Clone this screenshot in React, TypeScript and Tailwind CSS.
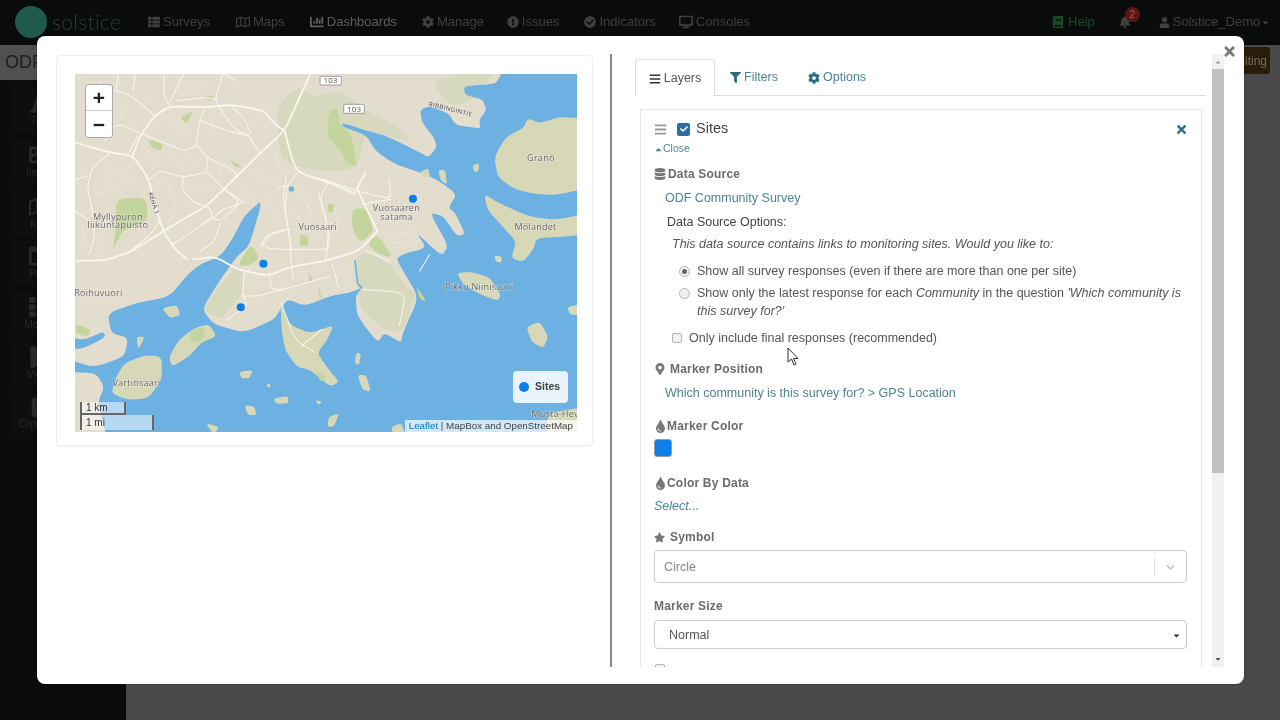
import {
  FaBars, FaBell, FaBook, FaCaretDown, FaCaretUp, FaCheck, FaCheckCircle, FaChevronDown, FaClipboard, FaCog, FaDatabase,
  FaDesktop, FaExclamationCircle, FaFilter, FaFont, FaImage, FaMapMarkerAlt, FaPlay, FaRegMap, FaChartBar, FaStar,
  FaTh, FaThList, FaTimes, FaTint, FaUser, FaColumns,
} from "react-icons/fa";
import type { ReactNode } from "react";

// rounds the corners of a traced "x,y x,y ..." outline so coasts and roads don't look like polygons
const smooth = (pts: string, closed = false) => {
  const p = pts.trim().split(/\s+/).map((s) => s.split(",").map(Number));
  const along = (a: number[], b: number[], t: number) => `${a[0] + (b[0] - a[0]) * t},${a[1] + (b[1] - a[1]) * t}`;
  const n = p.length;
  if (closed) {
    let d = `M${along(p[0], p[1], 0.3)}`;
    for (let i = 1; i <= n; i++) {
      const c = p[i % n];
      d += ` L${along(c, p[i - 1], 0.3)} Q${c[0]},${c[1]} ${along(c, p[(i + 1) % n], 0.3)}`;
    }
    return d + " Z";
  }
  let d = `M${p[0][0]},${p[0][1]}`;
  for (let i = 1; i < n - 1; i++) {
    d += ` L${along(p[i], p[i - 1], 0.3)} Q${p[i][0]},${p[i][1]} ${along(p[i], p[i + 1], 0.3)}`;
  }
  return d + ` L${p[n - 1][0]},${p[n - 1][1]}`;
};

const SEA =
  "1600,-50 1320,-50 1305,15 1288,42 1195,48 1198,75 1250,88 1262,120 1240,150 1245,176 1170,165 1150,130 1092,108 1065,120 1072,160 1105,200 1115,232 1090,262 1060,245 1020,225 960,196 905,182 835,158 835,170 905,195 935,245 990,282 1050,302 1114,328 1174,373 1149,413 1169,428 1199,493 1174,498 1134,438 1094,428 1149,528 1129,558 1054,488 1084,533 1014,553 994,568 1054,668 1054,698 1014,788 1009,818 959,788 939,818 879,738 874,678 894,653 854,668 799,678 724,708 674,688 654,713 634,748 544,788 454,763 419,718 474,628 524,558 559,528 599,388 544,438 509,508 474,558 414,583 380,610 322,680 222,700 140,730 150,790 200,802 190,860 100,892 20,868 20,905 105,910 130,950 110,1000 150,1150 1600,1150";

const WATER_EXTRA = [
  "20,800 70,810 125,785 135,800 70,835 20,838",
];

const ISLANDS = [
  "1385,145 1420,160 1480,140 1600,150 1600,345 1470,375 1400,372 1340,355 1295,320 1285,260 1320,200 1370,175",
  "1255,372 1300,400 1390,440 1470,450 1600,420 1600,490 1480,500 1410,505 1400,540 1370,575 1335,565 1350,515 1310,470 1265,420",
  "1175,610 1210,605 1270,620 1305,675 1295,692 1240,672 1190,640",
  "652,700 680,765 740,790 810,765 790,810 760,850 800,905 825,935 800,950 740,900 700,890 665,840 655,780",
  "440,762 462,800 420,815 380,860 330,890 322,860 350,810 395,775",
  "190,880 250,855 300,860 300,930 260,985 200,990 150,970 165,920",
  "1380,770 1420,755 1445,800 1430,835 1395,815",
  "1500,710 1560,700 1560,735 1510,735",
  "300,715 345,705 355,735 325,745",
  "530,905 570,900 560,925 535,925",
  "630,985 675,978 675,1000 640,1002",
  "545,1005 575,1010 580,1035 555,1035",
  "795,1040 825,1030 810,1070 790,1070",
  "880,915 905,915 920,965 895,960",
  "875,850 890,850 885,885 872,880",
  "225,800 250,800 230,840",
  "1222,285 1240,280 1238,305 1224,305",
  "1120,300 1140,300 1145,345 1125,330",
  "1065,305 1090,295 1095,325 1075,320",
  "1285,555 1308,560 1305,578 1290,575",
  "1440,1030 1560,1010 1560,1150 1440,1150",
  "610,940 625,945 615,955",
  "755,990 775,995 765,1005",
  "980,1070 1010,1060 1020,1090 985,1095",
  "430,1060 470,1070 455,1095",
];

// coordinates of the two map areas traced at 1:1, drawn with a translate
const NW_ROADS_MAIN = [
  "-20,200 100,235 170,245 215,310 250,440 265,480 300,530 330,555",
  "700,-10 660,80 620,170 550,235 440,345 390,395 270,465 170,530 90,560 0,560",
  "170,245 190,190 235,125 280,97 385,100 460,92 560,110 590,150 620,170",
  "620,170 640,250 660,295 750,325 830,360",
];

const NW_ROADS = [
  "120,50 165,65 235,125",
  "180,-10 170,50",
  "265,-10 260,60 280,97",
  "325,-10 280,85",
  "440,-10 415,70 425,95 470,165 515,185 525,205 545,235",
  "300,80 390,70 420,80",
  "385,100 365,150 360,215 320,230 260,205 210,185 130,150 100,165 90,200",
  "370,140 450,170 515,185",
  "360,215 390,250 470,290 480,310",
  "390,250 390,295 320,310 250,290 215,320",
  "390,295 440,345 500,385",
  "320,310 315,345 350,385 395,400",
  "395,400 410,430 350,470 290,510",
  "410,430 440,405 500,385",
  "100,240 50,280 35,340 55,430 55,500 40,540",
  "-10,320 35,305",
  "-10,405 40,440",
  "460,95 500,130 520,180",
  "660,295 630,330 620,400 640,530",
  "630,335 600,340",
  "750,325 725,370 750,470 745,530",
  "550,520 580,480 640,465",
  "185,185 160,235",
  "430,-5 475,20",
  "250,440 225,480 170,525",
  "120,50 130,-10",
];

const NW_STREETS = [
  "20,10 60,60 40,110", "70,20 110,70", "150,90 130,140", "200,90 230,60", "300,20 350,50 390,20", "280,130 330,180",
  "240,150 210,180", "410,130 400,180", "430,120 500,160", "280,230 320,290", "200,210 240,270", "70,260 130,300 170,330",
  "90,310 150,370", "60,360 110,350", "270,320 300,390 280,450", "340,250 370,290", "420,260 430,310", "350,340 410,340",
  "440,380 480,420", "330,400 370,430", "20,450 30,520", "90,460 60,530", "590,230 610,290", "530,300 590,330",
  "490,340 540,400", "560,360 600,430", "660,340 700,420", "690,440 720,500", "760,380 780,450",
];

const SE_ROADS_MAIN = [
  "-20,240 45,232 110,270 200,290 270,262 370,245 470,215 525,155",
  "525,155 470,40 465,25 490,-20",
];

const SE_ROADS = [
  "255,-10 245,60 265,170 270,260 275,300",
  "365,0 465,35",
  "465,35 565,60 560,0",
  "480,75 565,60",
  "350,40 385,170 370,245",
  "180,195 200,165 255,148",
  "180,195 210,210 370,210",
  "390,250 410,325",
  "205,285 210,330 250,330 385,290",
  "130,285 125,345 140,380 80,420",
  "150,265 130,285",
  "125,350 170,350 250,330",
  "490,215 560,245",
  "240,370 280,480 340,520",
  "300,500 360,450",
  "480,330 610,340 590,440",
  "680,225 650,275",
  "0,140 30,115 60,125 120,70 70,30",
  "0,215 40,190 60,130",
];

const SE_STREETS = [
  "280,100 300,130", "310,60 330,100", "290,215 300,250", "330,215 340,240", "280,280 370,270", "300,290 320,310",
  "340,310 360,350", "230,290 250,320", "150,300 200,310", "560,170 640,155", "570,190 650,185", "100,320 60,370", "420,250 450,310",
];

const FOREST = [
  "640,110 700,50 750,80 830,60 900,120 1000,170 1040,215 960,196 905,182 880,295 800,305 700,290 650,260",
  "1230,85 1290,0 1200,0 1100,40 1160,110",
  "874,568 905,540 985,590 1030,660 1054,670 1014,788 960,780 890,720 880,660",
  "419,718 524,583 545,615 535,675 474,750",
];

const GREEN = [
  "795,125 830,165 860,190 880,290 850,280 830,240 790,200",
  "864,418 904,413 929,483 889,518 864,478",
  "909,523 939,493 984,563 944,553",
  "524,588 564,523 589,563 559,588",
  "164,387 254,382 259,452 184,482 154,542 164,482",
  "45,760 90,780 80,800 45,790",
  "385,780 430,770 420,815 385,815",
  "1054,648 1084,693 1064,688",
  "259,207 304,222 299,242 269,232",
  "499,267 539,292 519,292",
  "354,142 394,122 374,162",
  "709,493 734,498 734,528 709,528",
  "794,398 814,403 804,428 789,423",
  "755,900 790,925 770,935",
  "794,122 824,112 824,202",
  "429,77 454,77 444,97",
  "764,648 779,688 764,678",
  "734,608 749,628 739,638",
];

const Map = () => (
  <svg viewBox="43 12 1487 1074" preserveAspectRatio="none" className="block h-full w-full">
    <rect x="43" y="12" width="1487" height="1074" fill="#e3ddce" />
    {FOREST.map((d) => <path key={d} d={smooth(d, true)} fill="#d6d9bd" />)}
    <path d={smooth(SEA, true)} fill="#6db1e3" />
    {WATER_EXTRA.map((d) => <path key={d} d={smooth(d, true)} fill="#6db1e3" />)}
    {ISLANDS.map((d) => <path key={d} d={smooth(d, true)} fill="#d6d8b8" />)}
    {GREEN.map((d) => <path key={d} d={smooth(d, true)} fill="#c3d59d" />)}
    <circle cx="684" cy="357" r="8" fill="#6db1e3" />
    <path d="M872,570 L880,640 L894,655" fill="none" stroke="#6db1e3" strokeWidth="5" />
    <g fill="none" stroke="#f8f6ef" strokeLinecap="round">
      <g transform="translate(44 12)">
        {NW_STREETS.map((d) => <path key={d} d={smooth(d)} strokeWidth="1.6" strokeOpacity="0.6" />)}
        {NW_ROADS.map((d) => <path key={d} d={smooth(d)} strokeWidth="3" />)}
        {NW_ROADS_MAIN.map((d) => <path key={d} d={smooth(d)} strokeWidth="5.5" />)}
      </g>
      <g transform="translate(414 328)">
        {SE_STREETS.map((d) => <path key={d} d={smooth(d)} strokeWidth="1.6" strokeOpacity="0.6" />)}
        {SE_ROADS.map((d) => <path key={d} d={smooth(d)} strokeWidth="3" />)}
        {SE_ROADS_MAIN.map((d) => <path key={d} d={smooth(d)} strokeWidth="5.5" />)}
      </g>
    </g>
    <g fill="#fff" stroke="#777" strokeWidth="2">
      <rect x="769" y="19" width="63" height="26" rx="3" />
      <rect x="839" y="103" width="61" height="27" rx="3" />
    </g>
    <g fill="#555" fontSize="24" textAnchor="middle" fontFamily="'Open Sans', sans-serif">
      <text x="800" y="40">103</text>
      <text x="870" y="125">103</text>
    </g>
    <g fill="#666" fontSize="27" textAnchor="middle" fontFamily="'Open Sans', sans-serif" letterSpacing="0.6" stroke="#ffffff" strokeOpacity="0.5" strokeWidth="3" paintOrder="stroke">
      <text x="170" y="449">Myllypuron</text>
      <text x="170" y="475">liikuntapuisto</text>
      <text x="995" y="424">Vuosaaren</text>
      <text x="995" y="450">satama</text>
      <text x="762" y="481">Vuosaari</text>
      <text x="1423" y="273">Granö</text>
      <text x="1407" y="481">Mölandet</text>
      <text x="1240" y="659">Pikku Niinisaari</text>
      <text x="112" y="679">Roihuvuori</text>
      <text x="225" y="949">Vartiosaari</text>
      <text x="1465" y="1042">Musta-Hev</text>
      <text x="275" y="405" fontSize="19" fontWeight="600" transform="rotate(72 275 400)">KEHÄ 1</text>
      <text x="1155" y="124" fontSize="19" fontWeight="600" transform="rotate(14 1155 118)">RIBBINGINTIE</text>
    </g>
    <g fill="#0d7fea">
      <circle cx="1044" cy="386" r="12" />
      <circle cx="601" cy="581" r="12" />
      <circle cx="534" cy="712" r="12" />
    </g>
  </svg>
);

const NavItem = ({ icon, label, className = "" }: { icon: ReactNode; label: string; className?: string }) => (
  <div className={`flex items-center gap-[3px] text-[13px] ${className}`}>
    {icon}
    <span>{label}</span>
  </div>
);

const SideItem = ({ icon, label, className }: { icon: ReactNode; label: string; className: string }) => (
  <div className={`ml-[10px] flex w-[60px] flex-col items-center justify-center bg-[#0e0e0e] text-[#2a2a2a] ${className}`}>
    {icon}
    <span className="text-[10px] leading-[14px]">{label}</span>
  </div>
);

const Label = ({ icon, children, className = "" }: { icon?: ReactNode; children: ReactNode; className?: string }) => (
  <div className={`flex h-6 items-center text-[12px] font-bold tracking-[0.2px] text-[#6b6b6b] ${className}`}>
    {icon}
    <span>{children}</span>
  </div>
);

export default function App() {
  return (
    <div className="relative h-[720px] w-[1280px] overflow-hidden bg-[#494949] font-['Liberation_Sans',Arial,sans-serif] blur-[0.35px]">
      {/* top navbar */}
      <div className="flex h-[45px] items-start bg-[#0a0c0b] pt-[6px]">
        <div className="ml-[15px] h-8 w-8 rounded-full bg-[#1f5a4d]" />
        <span className="ml-[5px] w-[96px] text-[21px] font-light leading-[32px] tracking-[0.3px] text-[#2b3b38] font-['Lato',sans-serif]">solstice</span>
        <div className="flex h-8 items-center text-[#3f3f3f]">
          <NavItem icon={<FaThList className="text-[12px]" />} label="Surveys" />
          <NavItem className="ml-[26px]" icon={<FaRegMap className="text-[14px]" />} label="Maps" />
          <NavItem className="ml-[25px] text-[#5e5e5e]" icon={<FaChartBar className="text-[14px]" />} label="Dashboards" />
          <NavItem className="ml-[25px]" icon={<FaCog className="text-[12px]" />} label="Manage" />
          <NavItem className="ml-[23px]" icon={<FaExclamationCircle className="text-[12px]" />} label="Issues" />
          <NavItem className="ml-[25px]" icon={<FaCheckCircle className="text-[12px]" />} label="Indicators" />
          <NavItem className="ml-[23px]" icon={<FaDesktop className="text-[14px]" />} label="Consoles" />
        </div>
        <div className="ml-[302px] flex h-8 items-center">
          <NavItem className="text-[#1a4a24]" icon={<FaBook className="mr-[1px] text-[12px]" />} label="Help" />
          <div className="relative ml-[24px] text-[#3f3f3f]">
            <FaBell className="text-[12px]" />
            <span className="absolute -top-[9px] left-[6px] flex h-[15px] w-[15px] items-center justify-center rounded-full bg-[#5f1414] text-[10px] text-[#a85a5a]">2</span>
          </div>
          <NavItem className="ml-[28px] text-[12.5px] text-[#3f3f3f]" icon={<FaUser className="text-[11px]" />} label="Solstice_Demo" />
          <FaCaretDown className="ml-[1px] text-[9px] text-[#3f3f3f]" />
        </div>
      </div>

      {/* page under the dialog */}
      <div className="flex h-[675px]">
        <div className="w-[126px] shrink-0 bg-[#0b0b0b]">
          <div className="flex h-[35px] items-center bg-[#505050] pl-[5px] text-[18px] text-[#1d1d1d]">ODF</div>
          <div className="flex flex-col pt-[7px]">
            <SideItem className="h-[46px]" icon={<FaFont className="text-[22px]" />} label="Title" />
            <SideItem className="mt-[7px] h-[43px]" icon={<FaImage className="text-[22px]" />} label="Image" />
            <SideItem className="mt-[7px] h-[47px]" icon={<FaRegMap className="text-[22px]" />} label="Map" />
            <SideItem className="mt-[3px] h-[45px]" icon={<FaColumns className="text-[22px]" />} label="Pivot" />
            <SideItem className="mt-[7px] h-[43px]" icon={<FaTh className="text-[22px]" />} label="Mosaic" />
            <SideItem className="mt-[7px] h-[43px]" icon={<FaPlay className="text-[22px]" />} label="Video" />
            <SideItem className="mt-[8px] h-[40px]" icon={<FaClipboard className="text-[22px]" />} label="Clipboard" />
          </div>
        </div>
        <div className="flex flex-1 justify-end pr-[10px] pt-[2px]">
          <div className="flex h-[27px] w-[60px] items-center justify-end rounded-[3px] bg-[#2a1c0a] pr-[3px] text-[12px] text-[#7a6c55]">Editing</div>
        </div>
      </div>

      {/* dialog */}
      <div className="absolute left-[37px] top-[36px] flex h-[648px] w-[1207px] rounded-[8px] bg-white pt-[18px] shadow-[0_0_2px_rgba(0,0,0,0.5)]">
        <div className="h-[613px] w-[575px] shrink-0 border-r-2 border-[#8b8b8b] pl-[19px]">
          <div className="mt-px h-[391px] w-[537px] rounded-[4px] border border-[#eeeeee] p-[18px] shadow-[0_1px_1px_rgba(0,0,0,0.04)]">
            <div className="relative h-[358px] w-[502px] overflow-hidden">
              <Map />
              <div className="absolute left-[10px] top-[10px] w-[28px] rounded-[3px] border border-[#aaaaaa] bg-white text-[#222]">
                <div className="flex h-[26px] items-center justify-center border-b border-[#cccccc] text-[21px] font-bold leading-none">+</div>
                <div className="flex h-[26px] items-center justify-center text-[21px] font-bold leading-none">−</div>
              </div>
              <div className="absolute left-[438px] top-[297px] flex h-[32px] w-[55px] items-center rounded-[4px] bg-white/85 pl-[6px] text-[10.5px] font-bold text-[#444]">
                <span className="mr-[6px] h-[10px] w-[10px] rounded-full bg-[#0d7fea]" />
                Sites
              </div>
              <div className="absolute bottom-[17px] left-[5px] flex h-[13px] w-[46px] items-center border-x-2 border-b-2 border-[#666] bg-white/50 pl-[4px] text-[10px] text-[#333]">1 km</div>
              <div className="absolute bottom-[2px] left-[5px] flex h-[15px] w-[74px] items-center border-x-2 border-[#666] bg-white/50 pl-[4px] text-[10px] text-[#333]">1 mi</div>
              <div className="absolute bottom-0 right-0 flex h-[12px] items-center bg-white/70 px-[4px] text-[9.8px] text-[#444]">
                <span className="text-[#0078a8]">Leaflet</span>&nbsp;|&nbsp;MapBox and OpenStreetMap
              </div>
            </div>
          </div>
        </div>

        <div className="relative h-[613px] flex-1 overflow-hidden pl-[23px]">
          <div className="w-[571px] pt-[5px]">
            {/* tabs */}
            <div className="flex h-[37px] border-b border-[#dddddd] text-[12.5px] text-[#4d8494]">
              <div className="flex h-[37px] w-[80px] items-center justify-center gap-[3px] rounded-t-[3px] border border-b-0 border-[#dddddd] bg-white pt-px text-[#555]">
                <FaBars className="text-[12px] text-[#333]" />Layers
              </div>
              <div className="ml-[15px] flex items-center gap-[3px] pt-px"><FaFilter className="text-[11px] text-[#2d6c80]" />Filters</div>
              <div className="ml-[30px] flex items-center gap-[3px] pt-px"><FaCog className="text-[12px] text-[#2d6c80]" />Options</div>
            </div>

            {/* layer card */}
            <div className="ml-[5px] mt-[13px] h-[600px] w-[562px] border border-[#e6e6e6] pl-[13px] pr-[13px] pt-[7px] text-[12.5px] text-[#555]">
              <div className="flex h-6 items-center">
                <FaBars className="text-[13px] text-[#999]" />
                <span className="ml-[10px] flex h-[13px] w-[13px] items-center justify-center rounded-[2px] bg-[#2a6ea8]"><FaCheck className="text-[8px] text-white" /></span>
                <span className="ml-[6px] text-[14.5px] text-[#444]">Sites</span>
                <FaTimes className="ml-auto text-[13px] text-[#2d6c80]" />
              </div>
              <div className="flex h-4 items-center text-[10.5px] text-[#4d8494]">
                <FaCaretUp className="text-[9px]" />Close
              </div>
              <Label className="mt-[5px]" icon={<FaDatabase className="mr-[2px] text-[12px] text-[#777]" />}>Data Source</Label>
              <div className="flex h-6 items-center pl-[11px] text-[#4d8494]">ODF Community Survey</div>
              <div className="flex h-6 items-center pl-[13px] text-[#444]">Data Source Options:</div>
              <div className="flex h-5 items-center pl-[18px] italic">This data source contains links to monitoring sites. Would you like to:</div>
              <div className="mt-[6px] flex h-[22px] items-center pl-[25px]">
                <span className="mr-[7px] flex h-[11px] w-[11px] items-center justify-center rounded-full border border-[#b5b5b5] bg-[#f0f0f0]"><span className="h-[5px] w-[5px] rounded-full bg-[#666]" /></span>
                Show all survey responses (even if there are more than one per site)
              </div>
              <div className="flex pl-[25px] pt-[2px] leading-[18px]">
                <span className="mr-[7px] mt-[4px] h-[11px] w-[11px] shrink-0 rounded-full border border-[#b5b5b5] bg-[#f0f0f0]" />
                <span>Show only the latest response for each <i>Community</i> in the question <i>'Which community is this survey for?'</i></span>
              </div>
              <div className="mt-[6px] flex h-6 items-center pl-[18px]">
                <span className="mr-[7px] h-[10px] w-[10px] rounded-[2px] border border-[#b5b5b5] bg-[#f2f2f2]" />
                Only include final responses (recommended)
              </div>
              <Label className="mt-[7px]" icon={<FaMapMarkerAlt className="mr-[4px] text-[12px] text-[#777]" />}>Marker Position</Label>
              <div className="flex h-6 items-center pl-[11px] text-[#4d8494]">Which community is this survey for? &gt; GPS Location</div>
              <Label className="mt-[9px]" icon={<FaTint className="text-[13px] text-[#777]" />}>Marker Color</Label>
              <div className="mt-px h-[18px] w-[18px] rounded-[3px] border border-[#9a9a9a] bg-[#0d7fea]" />
              <Label className="mt-[14px]" icon={<FaTint className="text-[13px] text-[#777]" />}>Color By Data</Label>
              <div className="flex h-[22px] items-center italic text-[#4d8494]">Select...</div>
              <Label className="mt-[8px]" icon={<FaStar className="mr-[5px] text-[11px] text-[#777]" />}>Symbol</Label>
              <div className="mt-[1px] flex h-[33px] w-[533px] items-center rounded-[4px] border border-[#cccccc] pl-[9px] pt-px text-[#888]">
                Circle
                <span className="ml-auto h-[18px] w-px bg-[#dddddd]" />
                <FaChevronDown className="mx-[11px] text-[9px] text-[#bbbbbb]" />
              </div>
              <Label className="mt-[11px]">Marker Size</Label>
              <div className="mt-[2px] flex h-[29px] w-[533px] items-center rounded-[4px] border border-[#cccccc] pl-[14px] pr-[5px] pt-px text-[#555]">
                Normal
                <FaCaretDown className="ml-auto text-[9px] text-[#333]" />
              </div>
              <div className="ml-px mt-[15px] h-[10px] w-[10px] rounded-[2px] border border-[#b5b5b5] bg-[#f2f2f2]" />
            </div>
          </div>

          {/* scrollbar */}
          <div className="absolute right-[20px] top-0 flex h-[613px] w-[12px] flex-col items-center bg-[#f1f1f1]">
            <FaCaretUp className="mt-[4px] h-[8px] text-[8px] text-[#a0a0a0]" />
            <div className="mt-[3px] h-[404px] w-full bg-[#c1c1c1]" />
            <FaCaretDown className="mb-[4px] mt-auto h-[8px] text-[8px] text-[#505050]" />
          </div>
        </div>

        <FaTimes className="absolute right-[7px] top-[8px] text-[15px] text-[#777]" />
      </div>

      {/* mouse cursor */}
      <svg className="absolute left-[787px] top-[347px]" width="12" height="19" viewBox="0 0 12 19">
        <path d="M1 1 L1 15 L4.5 12 L7 18 L9 17 L6.5 11.5 L11 11.5 Z" fill="#fff" stroke="#333" strokeWidth="1" />
      </svg>
    </div>
  );
}
